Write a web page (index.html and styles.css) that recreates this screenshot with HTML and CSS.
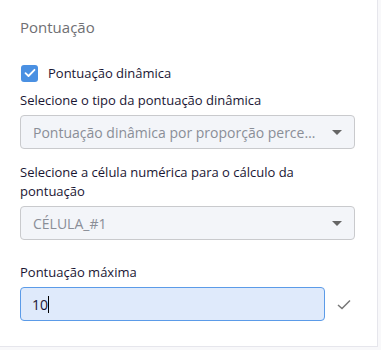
FILE: index.html
```html
<!DOCTYPE html>
<html lang="pt">

<head>
  <meta charset="UTF-8">
  <title>Pontuação</title>
  <link rel="stylesheet" href="styles.css">
</head>

<body>
  <section class="painel">
    <h2 class="titulo">Pontuação</h2>

    <label class="check">
      <span class="caixa">
        <svg width="12" height="10" viewBox="0 0 12 10">
          <path d="M1.5 5.2 L4.5 8 L10.5 1.8" fill="none" stroke="#fff" stroke-width="1.8" stroke-linecap="round" stroke-linejoin="round" />
        </svg>
      </span>
      Pontuação dinâmica
    </label>

    <div class="campo">
      <p class="rotulo">Selecione o tipo da pontuação dinâmica</p>
      <div class="select">
        <span class="valor">Pontuação dinâmica por proporção percentual</span>
        <span class="seta"></span>
      </div>
    </div>

    <div class="campo">
      <p class="rotulo">Selecione a célula numérica para o cálculo da pontuação</p>
      <div class="select">
        <span class="valor">CÉLULA_#1</span>
        <span class="seta"></span>
      </div>
    </div>

    <div class="campo maxima">
      <p class="rotulo">Pontuação máxima</p>
      <div class="linha">
        <div class="input"><span>10</span><span class="cursor"></span></div>
        <svg class="ok" width="14" height="11" viewBox="0 0 14 11">
          <path d="M1 6 L5 9.5 L13 1.5" fill="none" stroke="#777" stroke-width="1.5" />
        </svg>
      </div>
    </div>
  </section>
</body>

</html>
```

FILE: styles.css
```css
* {
  box-sizing: border-box;
}

body {
  margin: 0;
  background: #f8f8fa;
  font-family: "Open Sans", "Noto Sans", sans-serif;
}

.painel {
  width: 378px;
  height: 347px;
  background: #fff;
  border-right: 1px solid #e6e6ec;
  border-bottom: 1px solid #e6e6ec;
  padding: 17px 22px 0 20px;
}

.titulo {
  margin: 0;
  font-size: 15px;
  font-weight: 400;
  color: #6f6f73;
  line-height: 20px;
}

.check {
  display: flex;
  align-items: center;
  gap: 10px;
  margin-top: 27px;
  font-size: 13px;
  color: #1a1633;
  height: 18px;
}

.caixa {
  width: 17px;
  height: 17px;
  border-radius: 3px;
  background: #4a90e2;
  display: flex;
  align-items: center;
  justify-content: center;
  margin-left: 1px;
}

.campo {
  margin-top: 9px;
}

.rotulo {
  margin: 0 0 5px;
  font-size: 13px;
  line-height: 19px;
  color: #1a1633;
}

.select {
  height: 34px;
  width: 335px;
  background: #f3f5f9;
  border: 1px solid #c9cacd;
  border-radius: 4px;
  display: flex;
  align-items: center;
  padding: 0 12px;
  gap: 14px;
}

.valor {
  flex: 1;
  font-size: 14px;
  color: #8a8e97;
  white-space: nowrap;
  overflow: hidden;
  text-overflow: ellipsis;
}

.seta {
  width: 0;
  height: 0;
  border-left: 5px solid transparent;
  border-right: 5px solid transparent;
  border-top: 5px solid #666;
}

.campo + .campo {
  margin-top: 14px;
}

.campo.maxima {
  margin-top: 23px;
}

.linha {
  display: flex;
  align-items: center;
  gap: 12px;
}

.input {
  width: 305px;
  height: 34px;
  background: #dfeafb;
  border: 1px solid #5b9be8;
  border-radius: 4px;
  display: flex;
  align-items: center;
  padding: 0 11px;
  font-size: 14px;
  color: #1a1633;
}

.cursor {
  width: 1px;
  height: 17px;
  background: #000;
}
```
